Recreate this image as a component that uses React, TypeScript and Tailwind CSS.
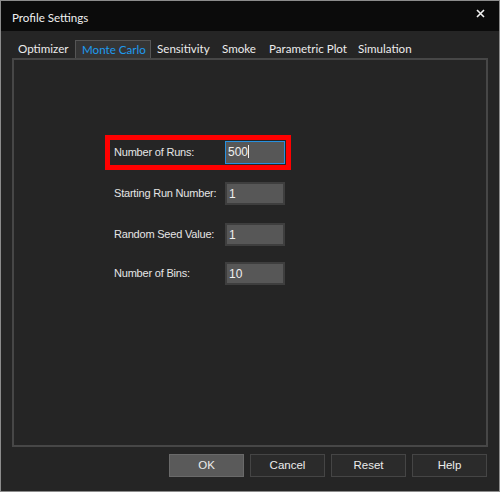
import React from 'react';

const tabs = [
  { label: 'Optimizer', w: 'w-[63px]' },
  { label: 'Monte Carlo', w: 'w-[76px]', active: true },
  { label: 'Sensitivity', w: 'w-[65px]' },
  { label: 'Smoke', w: 'w-[47px]' },
  { label: 'Parametric Plot', w: 'w-[89px]' },
  { label: 'Simulation', w: 'w-[67px]' },
];

const fields = [
  { label: 'Number of Runs:', value: '500', focused: true, mt: 'mt-[81px]' },
  { label: 'Starting Run Number:', value: '1', mt: 'mt-[18px]' },
  { label: 'Random Seed Value:', value: '1', mt: 'mt-[18px]' },
  { label: 'Number of Bins:', value: '10', mt: 'mt-[16px]' },
];

const buttons = ['OK', 'Cancel', 'Reset', 'Help'];

const ui = { fontFamily: 'Lato, "Noto Sans", sans-serif' };
const classic = { fontFamily: '"Liberation Sans", Arial, sans-serif' };

const App: React.FC = () => {
  return (
    <div className="w-[500px] h-[492px] border border-[#8c8c8c] bg-[#252525] flex flex-col overflow-hidden">
      {/* title bar */}
      <div className="h-[30px] shrink-0 bg-[#0b0b0b] flex items-center justify-between pl-[11px] pr-[14px]">
        <span className="text-[11.6px] text-[#f0f0f0] pt-[4px]" style={ui}>Profile Settings</span>
        <svg width="9" height="9" viewBox="0 0 9 9" className="mb-[6px]">
          <path d="M1 1 L8 8 M8 1 L1 8" stroke="#f2f2f2" strokeWidth="1.6" />
        </svg>
      </div>

      <div className="flex-1 flex flex-col px-[11px]">
        {/* tab strip */}
        <div className="flex mt-[9px] h-[18px]" style={ui}>
          {tabs.map(t => (
            <div
              key={t.label}
              className={`${t.w} h-[18px] pl-[6px] text-[11.6px] leading-[18px] whitespace-nowrap ${
                t.active
                  ? 'bg-[#353535] border border-b-0 border-[#555555] pl-[5px] text-[#1e9bf0]'
                  : 'text-[#ececec]'
              }`}
            >
              {t.label}
            </div>
          ))}
        </div>

        {/* tab panel */}
        <div className="relative h-[389px] border-2 border-[#474747] bg-[#252525] flex flex-col pl-[100px]" style={classic}>
          {fields.map(f => (
            <div key={f.label} className={`flex items-center ${f.mt}`}>
              <span className="w-[111px] text-[11px] tracking-[-0.2px] text-[#e6e6e6]">{f.label}</span>
              <div
                className={`w-[60px] h-[23px] bg-[#575757] text-[12px] text-[#f0f0f0] leading-[20px] px-[2px] ${
                  f.focused ? 'border border-[#2790e0]' : 'border-2 border-[#3e3e3e]'
                }`}
              >
                {f.value}
                {f.focused && <span className="inline-block w-px h-[13px] bg-[#f0f0f0] align-[-2px]" />}
              </div>
            </div>
          ))}

          {/* red highlight annotation */}
          <div className="absolute left-[91px] top-[75px] w-[186px] h-[35px] border-[5px] border-[#ff0000]" />
        </div>

        {/* buttons */}
        <div className="flex justify-end gap-[6px] mt-[7px] pr-px" style={classic}>
          {buttons.map((b, i) => (
            <button
              key={b}
              className={`w-[75px] h-[23px] text-[11.5px] text-[#ececec] border ${
                i === 0 ? 'bg-[#5a5a5a] border-[#6a6a6a]' : 'bg-[#2b2b2b] border-[#454545]'
              }`}
            >
              {b}
            </button>
          ))}
        </div>
      </div>
    </div>
  );
};

export default App;
